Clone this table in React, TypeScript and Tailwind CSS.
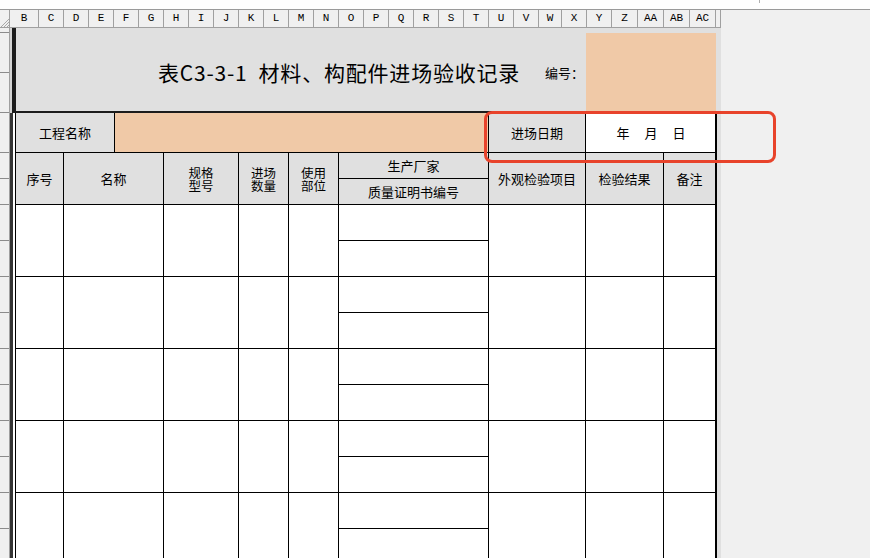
import React from "react";

const letters: [string, number][] = [
  ["B", 29], ["C", 25], ["D", 25], ["E", 25], ["F", 25], ["G", 25], ["H", 25],
  ["I", 25], ["J", 25], ["K", 25], ["L", 25], ["M", 25], ["N", 25], ["O", 25],
  ["P", 25], ["Q", 25], ["R", 25], ["S", 25], ["T", 25], ["U", 25], ["V", 25],
  ["W", 23], ["X", 25], ["Y", 25], ["Z", 26], ["AA", 26], ["AB", 26], ["AC", 26],
  ["", 5],
];

// gutter row heights, from y=28
const gutterRows = [5, 40, 40, 40, 26, 26, 36, 36, 36, 36, 36, 36, 36, 36, 36, 36];

const cols = "grid grid-cols-[48px_100px_75px_50px_50px_150px_97px_78px_51px]";

function ColumnHeader() {
  return (
    <div className="flex h-[19px] border-t border-[#9a9a9a]">
      <div className="relative w-[10px] border-r border-b border-[#a0a0a0] bg-[#f0f0f0]">
        <svg className="absolute right-0 bottom-0" width="8" height="8" viewBox="0 0 8 8">
          <path d="M8 0 L0 8 M8 3 L3 8 M8 6 L6 8" stroke="#a8a8a8" strokeWidth="1" />
        </svg>
      </div>
      {letters.map(([l, w], i) => (
        <div
          key={i}
          style={{ width: w }}
          className="flex items-center justify-center border-r border-b border-[#a0a0a0] bg-[#f0f0f0] text-[11px] text-black font-['Liberation_Mono',monospace]"
        >
          {l}
        </div>
      ))}
      <div className="flex-1 bg-[#f0f0f0]" />
    </div>
  );
}

function Gutter() {
  return (
    <div className="w-[10px] border-r border-[#a0a0a0] bg-[#f0f0f0] flex flex-col">
      {gutterRows.map((h, i) => (
        <div key={i} style={{ height: h }} className="shrink-0 border-b border-[#8c8c8c]" />
      ))}
    </div>
  );
}

function Cell({ children, className = "" }: { children?: React.ReactNode; className?: string }) {
  return (
    <div className={`flex items-center justify-center border-r border-b border-black text-[13px] leading-[13px] text-center ${className}`}>
      {children}
    </div>
  );
}

function TwoLine({ a, b }: { a: string; b: string }) {
  return (
    <div className="flex flex-col items-center justify-center border-r border-b border-black text-[12.5px]">
      <div className="h-[13px] leading-[13px]">{a}</div>
      <div className="h-[13px] leading-[13px]">{b}</div>
    </div>
  );
}

function DataRow() {
  return (
    <div className={`${cols} h-[72px] shrink-0`}>
      <Cell />
      <Cell />
      <Cell />
      <Cell />
      <Cell />
      <div className="flex flex-col border-r border-black">
        <div className="h-[36px] border-b border-black" />
        <div className="h-[36px] border-b border-black" />
      </div>
      <Cell />
      <Cell />
      <div className="border-b border-black" />
    </div>
  );
}

export default function App() {
  return (
    <div className="relative w-[870px] h-[558px] overflow-hidden bg-white font-['Noto_Sans_CJK_SC',sans-serif] text-black">
      <div className="h-[9px]" />
      <ColumnHeader />
      <div className="flex h-[530px]">
        <Gutter />
        <div className="w-[711px] flex flex-col">
          {/* title */}
          <div className="flex h-[85px] shrink-0">
            <div className="w-[2px] bg-[#d4d4d4]" />
            <div className="w-[705px] flex items-start border-l-4 border-b-2 border-[#1c1c1c] bg-[#e0e0e0]">
              <div className="ml-[142px] mt-[34px] h-[21px] leading-[21px] text-[21px] tracking-[0.8px] whitespace-pre">
                表C3-3-1  材料、构配件进场验收记录
              </div>
              <div className="ml-auto mt-[38px] text-[13px] leading-[14px]">编号：</div>
              <div className="ml-[2px] mt-[5px] h-[78px] w-[130px] bg-[#f0c9a7]" />
              <div className="w-[1px]" />
            </div>
            <div className="w-[4px] bg-[#e0e0e0]" />
          </div>
          {/* table */}
          <div className="flex flex-1 min-h-0">
            <div className="w-[3px] bg-[#353535]" />
            <div className="w-[2px] bg-white" />
            <div className="w-[702px] flex flex-col border-l border-r-2 border-black">
              <div className="grid grid-cols-[99px_374px_97px_129px] h-[40px] shrink-0">
                <Cell className="bg-[#e0e0e0]">工程名称</Cell>
                <Cell className="bg-[#f0c9a7]" />
                <Cell className="bg-[#e0e0e0]">进场日期</Cell>
                <div className="flex items-center justify-center gap-[15px] border-b border-black text-[13px] pl-[1px]">
                  <span>年</span>
                  <span>月</span>
                  <span>日</span>
                </div>
              </div>
              <div className={`${cols} h-[52px] shrink-0 bg-[#e0e0e0]`}>
                <Cell>序号</Cell>
                <Cell>名称</Cell>
                <TwoLine a="规格" b="型号" />
                <TwoLine a="进场" b="数量" />
                <TwoLine a="使用" b="部位" />
                <div className="flex flex-col border-r border-black">
                  <div className="h-[26px] flex items-center justify-center border-b border-black text-[13px] leading-[13px]">
                    生产厂家
                  </div>
                  <div className="h-[26px] flex items-center justify-center border-b border-black text-[13px] leading-[13px]">
                    质量证明书编号
                  </div>
                </div>
                <Cell>外观检验项目</Cell>
                <Cell>检验结果</Cell>
                <div className="flex items-center justify-center border-b border-black text-[13px] leading-[13px]">备注</div>
              </div>
              <div className="flex flex-col">
                <DataRow />
                <DataRow />
                <DataRow />
                <DataRow />
                <DataRow />
              </div>
            </div>
            <div className="w-[4px] bg-[#e0e0e0]" />
          </div>
        </div>
        <div className="flex-1 bg-[#f0f0f0]" />
      </div>
      <div className="absolute left-[759px] top-0 h-[3px] w-px bg-[#b0b0b0]" />
      <div className="absolute left-[484px] top-[111px] w-[292px] h-[52px] rounded-[8px] border-[3px] border-[#e8432b]" />
    </div>
  );
}
